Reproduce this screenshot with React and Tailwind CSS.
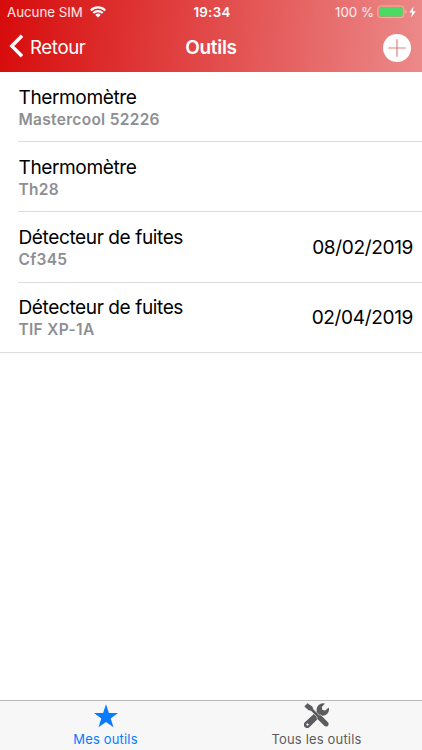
import React from 'react';

const tools = [
    { id: 1, name: 'Thermomètre', model: 'Mastercool 52226' },
    { id: 2, name: 'Thermomètre', model: 'Th28' },
    { id: 3, name: 'Détecteur de fuites', model: 'Cf345', date: '08/02/2019' },
    { id: 4, name: 'Détecteur de fuites', model: 'TIF XP-1A', date: '02/04/2019' },
];

const ToolsIcon = () => (
    <svg className="w-[25px] h-[25px]" viewBox="0 0 25 25" fill="currentColor">
        {/* wrench */}
        <path
            fillRule="evenodd"
            d="M21 .6a6.4 6.4 0 0 0-8.2 7.6L.9 19.2a3.3 3.3 0 0 0 4.7 4.9L17.2 12.6a6.4 6.4 0 0 0 7.5-8.2l-3.5 3.1-2.8-.6-.6-2.8zM4.3 20.7a1.1 1.1 0 1 1-1.6 1.6 1.1 1.1 0 0 1 1.6-1.6z"
        />
        {/* screwdriver */}
        <path
            stroke="#f7f7f7"
            strokeWidth="0.6"
            d="M0 3.4 3.5 0 8.7 3.4l.8 2.7 6 6.1 1.5-.2 7.2 7.2c1.1 1.3.9 2.6-.1 3.7s-2.6 1.3-3.8.2l-7.4-7.3.3-1.6-6-6-3-.9z"
        />
    </svg>
);

const StatusBar = () => (
    <div className="grid grid-cols-3 items-center h-6 pt-px pl-[7px] pr-[5px] text-[13.3px] text-white/90">
        <div className="flex items-center gap-[7px]">
            <span className="whitespace-nowrap tracking-[-0.03px]">Aucune SIM</span>
            <svg className="w-4 h-3 shrink-0 -mt-px" viewBox="0 0 16 12" fill="none" stroke="white" strokeWidth="2.1">
                <path d="M0.8 4.4a10.2 10.2 0 0 1 14.4 0" />
                <path d="M3.3 7.1a6.5 6.5 0 0 1 9.4 0" />
                <path d="M8 11.6 5.3 8.9a3.8 3.8 0 0 1 5.4 0z" fill="white" stroke="none" />
            </svg>
        </div>
        <span className="text-center font-semibold tracking-[0.3px] text-white">19:34</span>
        <div className="flex items-center justify-end">
            <span className="whitespace-nowrap mr-[3px]">100 %</span>
            <svg className="w-[30px] h-3.5 shrink-0 -mt-px" viewBox="0 0 30 14">
                <rect x="0.9" y="1" width="26" height="11.6" rx="2.8" fill="none" stroke="#f5b4a0" strokeWidth="1" />
                <rect x="2.1" y="2.2" width="23.6" height="9.2" rx="1.6" fill="#4cd964" />
                <path d="M28.2 4.8v4q1.4-.6 1.4-2t-1.4-2" fill="#f5b4a0" />
            </svg>
            <svg className="w-[7px] h-3 ml-0.5 mr-px -mt-px shrink-0" viewBox="0 0 7 12" fill="white">
                <path d="M4.6 0.4 0.3 6.6h2.8L2.2 11.4 6.8 5.2H3.8z" />
            </svg>
        </div>
    </div>
);

const NavBar = () => (
    <div className="grid grid-cols-3 items-center h-12 pl-[9px] pr-[11px] text-white">
        <button className="flex items-center gap-[7px] text-[18.7px] tracking-[-0.4px]">
            <svg className="w-3.5 h-6 -mt-1" viewBox="0 0 14 24" fill="none" stroke="white" strokeWidth="3.4">
                <path d="M13 1.8 2.8 12 13 22.2" />
            </svg>
            Retour
        </button>
        <h1 className="pl-0.5 text-center text-[19px] font-semibold tracking-[-0.3px]">Outils</h1>
        <button className="justify-self-end">
            <svg className="w-7 h-7" viewBox="0 0 28 28">
                <circle cx="14" cy="14" r="14" fill="white" />
                <path d="M14 5.2v17.6M5.2 14h17.6" stroke="#e08080" strokeWidth="1.2" />
            </svg>
        </button>
    </div>
);

const ToolRow = ({ tool, last }) => (
    <li className={last ? 'border-b border-[#dcdcde]' : 'pl-[18px]'}>
        <div
            className={`flex items-center justify-between pr-[9px] ${
                last ? 'h-[69.5px] pl-[18px]' : 'h-[70.2px] border-b border-[#dcdcde]'
            }`}
        >
            <div className="pl-[0.5px]">
                <p className="text-[19.1px] leading-6 tracking-[-0.42px] text-black">{tool.name}</p>
                <p className="pt-px -mb-px text-[15.5px] leading-5 font-semibold text-[#8e8e93] tracking-[0.3px]">
                    {tool.model}
                </p>
            </div>
            {tool.date && <span className="text-[19.1px] tracking-[-0.38px] text-black">{tool.date}</span>}
        </div>
    </li>
);

const TabBar = () => (
    <nav className="grid grid-cols-2 h-[50px] border-t border-[#b9b9bb] bg-[#f7f7f7] text-[13px] leading-4 tracking-[0.17px]">
        <button className="flex flex-col items-center pt-[3px] text-[#087bff]">
            <svg className="w-6 h-6" viewBox="0 0 24 24" fill="currentColor">
                <path d="M12 .3 14.9 8.9H24l-7.3 5.5 2.8 8.9L12 17.9l-7.5 5.4 2.8-8.9L0 8.9h9.1z" />
            </svg>
            <span className="mt-[3px]">Mes outils</span>
        </button>
        <button className="flex flex-col items-center pt-0.5 text-[#5c5c5e]">
            <ToolsIcon />
            <span className="mt-[3px]">Tous les outils</span>
        </button>
    </nav>
);

export default function App() {
    return (
        <div className="flex flex-col h-screen bg-white font-['Inter',sans-serif]">
            <header className="h-[72px] shrink-0 bg-[linear-gradient(95deg,#d70b0b_0%,#e24a4a_50%,#ec8a8a_100%)]">
                <StatusBar />
                <NavBar />
            </header>
            <ul className="flex-1">
                {tools.map((tool, i) => (
                    <ToolRow key={tool.id} tool={tool} last={i === tools.length - 1} />
                ))}
            </ul>
            <TabBar />
        </div>
    );
}
